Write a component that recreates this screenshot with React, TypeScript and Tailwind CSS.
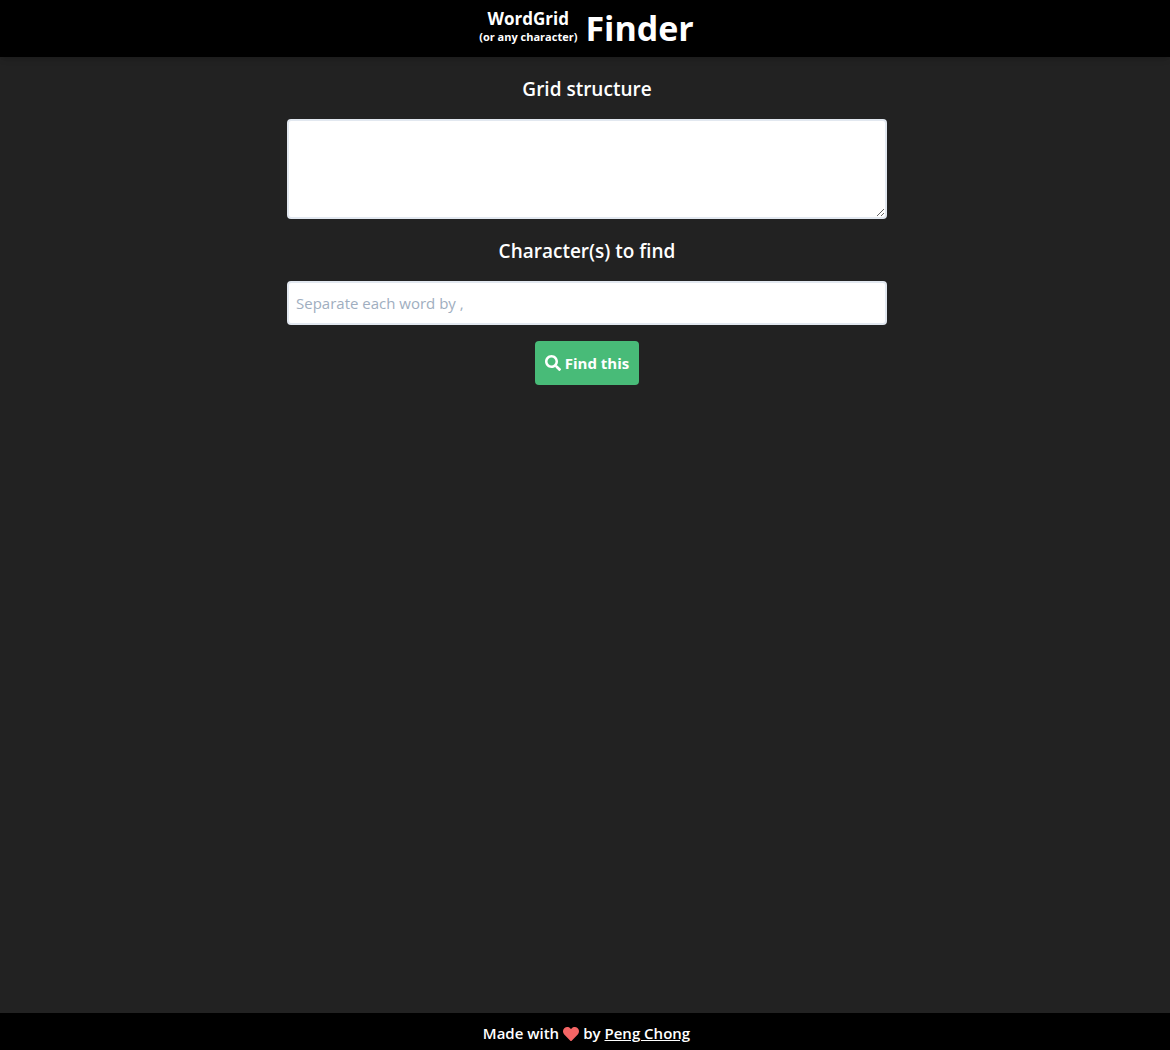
import { useState } from "react";
import { FaHeart, FaSearch } from "react-icons/fa";

const field =
  "block w-full rounded border-2 border-[#e2e8f0] bg-white px-[7px] py-2 text-[15px] text-black placeholder:text-[#a0aec0] focus:outline-none focus:border-[#48bb78]";

export default function App() {
  const [grid, setGrid] = useState("");
  const [words, setWords] = useState("");

  return (
    <div className="flex min-h-screen flex-col bg-[#222222] font-['Open_Sans','Noto_Sans',sans-serif] text-white">
      <header className="flex justify-center gap-2 bg-black pb-px pl-[3px] shadow-md">
        <div className="pt-[9px] text-center font-bold">
          <p className="text-[17px] leading-5">WordGrid</p>
          <p className="text-[11px] leading-4">(or any character)</p>
        </div>
        <h1 className="text-[34px] leading-[56px] font-bold">Finder</h1>
      </header>

      <main className="w-full flex-1 pl-1">
        <form
          onSubmit={(event) => event.preventDefault()}
          className="mx-auto flex max-w-[600px] flex-col items-center pt-[18px]"
        >
          <label htmlFor="grid" className="mb-4 text-[19px] leading-7 font-semibold">
            Grid structure
          </label>
          <textarea id="grid" value={grid} onChange={(e) => setGrid(e.target.value)} className={`${field} h-[100px]`} />
          <label htmlFor="words" className="mt-[18px] mb-4 text-[19px] leading-7 font-semibold">
            Character(s) to find
          </label>
          <input
            id="words"
            type="text"
            placeholder="Separate each word by ,"
            value={words}
            onChange={(e) => setWords(e.target.value)}
            className={`${field} h-11`}
          />
          <button type="submit" className="mt-4 flex h-11 items-center gap-1 rounded bg-[#48bb78] px-2.5 text-[15px] font-bold">
            <FaSearch className="size-4" />
            Find this
          </button>
        </form>
      </main>

      <footer className="flex items-center justify-center gap-1 bg-black pt-2 pb-1 pl-[3px] text-[15px] leading-[25px] font-semibold">
        Made with <FaHeart className="size-4 text-[#f56565]" aria-label="love" /> by
        <a href="#author" className="underline">Peng Chong</a>
      </footer>
    </div>
  );
}
